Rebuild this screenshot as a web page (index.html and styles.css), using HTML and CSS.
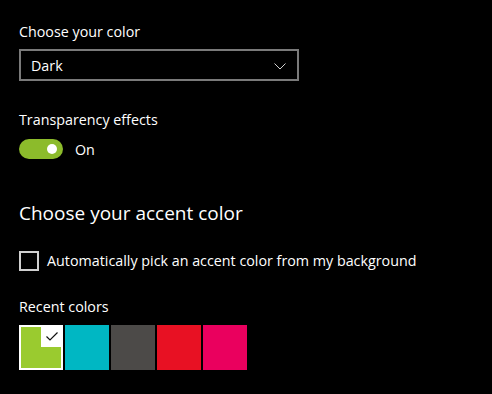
FILE: index.html
```html
<!DOCTYPE html>
<html>
<head>
<meta charset="utf-8">
<link rel="stylesheet" href="styles.css">
</head>
<body>
<div class="page">
  <div class="label first">Choose your color</div>
  <div class="select">
    <span>Dark</span>
    <svg class="chev" width="12" height="7" viewBox="0 0 12 7"><path d="M0.5 0.5 L6 6 L11.5 0.5" fill="none" stroke="#d0d0d0" stroke-width="1"/></svg>
  </div>

  <div class="label trans">Transparency effects</div>
  <div class="toggle-row">
    <div class="toggle"><div class="knob"></div></div>
    <span class="toggle-text">On</span>
  </div>

  <div class="heading">Choose your accent color</div>

  <div class="check-row">
    <div class="checkbox"></div>
    <span class="check-text">Automatically pick an accent color from my background</span>
  </div>

  <div class="label recent">Recent colors</div>
  <div class="swatches">
    <div class="swatch selected">
      <div class="corner">
        <svg width="12" height="9" viewBox="0 0 12 9"><path d="M0.5 4.5 L4 8 L11.5 0.5" fill="none" stroke="#111" stroke-width="1.2"/></svg>
      </div>
    </div>
    <div class="swatch teal"></div>
    <div class="swatch gray"></div>
    <div class="swatch red"></div>
    <div class="swatch pink"></div>
  </div>
</div>
</body>
</html>
```

FILE: styles.css
```css
html, body {
  margin: 0;
  padding: 0;
  background: #000;
  width: 492px;
  height: 394px;
  overflow: hidden;
}
.page {
  padding: 0 0 0 19px;
  font-family: "Open Sans", "Noto Sans", sans-serif;
  color: #fff;
  font-size: 14.3px;
}
.label {
  line-height: 20px;
  height: 20px;
}
.first {
  padding-top: 22px;
}
.select {
  margin-top: 7px;
  height: 28px;
  border: 2px solid #7a7a7a;
  display: flex;
  align-items: center;
  justify-content: space-between;
  padding: 0 11px 0 10px;
  box-sizing: content-box;
  width: 255px;
}
.chev {
  margin-top: 2px;
}
.trans {
  margin-top: 29px;
}
.toggle-row {
  margin-top: 9px;
  display: flex;
  align-items: center;
  height: 20px;
}
.toggle {
  width: 44px;
  height: 20px;
  border-radius: 10px;
  background: #8cbb2b;
  position: relative;
}
.knob {
  position: absolute;
  right: 6px;
  top: 5px;
  width: 10px;
  height: 10px;
  border-radius: 50%;
  background: #fff;
}
.toggle-text {
  margin-left: 12px;
}
.heading {
  margin-top: 41px;
  font-size: 19px;
  line-height: 26px;
  height: 26px;
}
.check-row {
  margin-top: 25px;
  display: flex;
  align-items: center;
  height: 20px;
}
.checkbox {
  width: 16px;
  height: 16px;
  border: 2px solid #d0d0d0;
}
.check-text {
  margin-left: 8px;
  line-height: 20px;
}
.recent {
  margin-top: 26px;
}
.swatches {
  margin-top: 8px;
  display: flex;
  gap: 2px;
}
.swatch {
  width: 44px;
  height: 45px;
  box-sizing: border-box;
}
.swatch.selected {
  background: #9acb2f;
  border: 2px solid #fff;
  position: relative;
}
.corner {
  position: absolute;
  right: -2px;
  top: -2px;
  width: 22px;
  height: 22px;
  background: #fff;
  display: flex;
  align-items: center;
  justify-content: center;
}
.teal { background: #00b7c3; }
.gray { background: #4c4a48; }
.red { background: #e81123; }
.pink { background: #ea005e; }
```
